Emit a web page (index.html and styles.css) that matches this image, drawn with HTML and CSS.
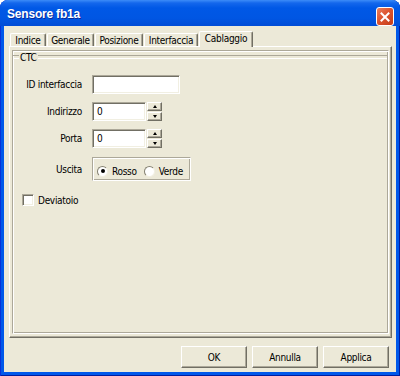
FILE: index.html
```html
<!DOCTYPE html>
<html lang="it">
<head>
    <meta charset="UTF-8">
    <title>Sensore fb1a</title>
    <link rel="stylesheet" href="styles.css">
</head>
<body>
    <div class="window">
        <div class="titlebar">
            <span class="title">Sensore fb1a</span>
            <button class="close" aria-label="Chiudi">
                <svg width="10" height="10" viewBox="0 0 10 10">
                    <path d="M1.5 1.5 L8.5 8.5 M8.5 1.5 L1.5 8.5" stroke="#fff" stroke-width="2" stroke-linecap="square"/>
                </svg>
            </button>
        </div>

        <div class="dialog">
            <div class="tabs">
                <div class="tab">Indice</div>
                <div class="tab">Generale</div>
                <div class="tab">Posizione</div>
                <div class="tab">Interfaccia</div>
                <div class="tab active">Cablaggio</div>
            </div>

            <div class="page">
                <div class="frame">
                    <div class="legend"><span>CTC</span></div>

                    <div class="form">
                        <div class="row">
                            <label class="lbl">ID interfaccia</label>
                            <div class="field wide"></div>
                        </div>
                        <div class="row">
                            <label class="lbl">Indirizzo</label>
                            <div class="field short">0</div>
                            <div class="spin">
                                <span class="spin-btn"><i class="arrow up"></i></span>
                                <span class="spin-btn"><i class="arrow down"></i></span>
                            </div>
                        </div>
                        <div class="row">
                            <label class="lbl">Porta</label>
                            <div class="field short">0</div>
                            <div class="spin">
                                <span class="spin-btn"><i class="arrow up"></i></span>
                                <span class="spin-btn"><i class="arrow down"></i></span>
                            </div>
                        </div>
                        <div class="row row-group">
                            <label class="lbl">Uscita</label>
                            <div class="radio-group">
                                <span class="radio checked"></span><span class="radio-text">Rosso</span>
                                <span class="radio"></span><span class="radio-text">Verde</span>
                            </div>
                        </div>
                    </div>

                    <div class="check-row">
                        <span class="checkbox"></span>
                        <span>Deviatoio</span>
                    </div>
                </div>
            </div>

            <div class="buttons">
                <button class="btn">OK</button>
                <button class="btn">Annulla</button>
                <button class="btn">Applica</button>
            </div>
        </div>
    </div>
</body>
</html>
```

FILE: styles.css
```css
/* Base */
* {
    margin: 0;
    padding: 0;
    box-sizing: border-box;
}

html, body {
    background: #fff;
}

body {
    font-family: "DejaVu Sans Condensed", "Liberation Sans", sans-serif;
    font-size: 10px;
    letter-spacing: -0.3px;
    color: #000;
}

/* Window frame */
.window {
    width: 400px;
    height: 376px;
    display: flex;
    flex-direction: column;
    padding: 0 4px 4px;
    background: #0058EA;
    border-radius: 8px 8px 0 0;
    overflow: hidden;
    box-shadow: inset 1px 0 #0831D9, inset -1px 0 #001EA0, inset 0 -1px #001EA0;
}

.titlebar {
    height: 26px;
    margin: 0 -4px;
    padding: 2px 6px 0 7px;
    display: flex;
    align-items: center;
    justify-content: space-between;
    background: linear-gradient(#3C8CF8 0, #1467EC 3px, #0058E6 8px, #0056E3 18px, #004CD6 26px);
}

.title {
    color: #fff;
    font-family: "Liberation Sans", sans-serif;
    font-weight: bold;
    font-size: 12px;
    letter-spacing: -0.2px;
    text-shadow: 1px 1px #0A2A9A;
}

.close {
    width: 18px;
    height: 19px;
    align-self: flex-start;
    margin-top: 5px;
    display: flex;
    align-items: center;
    justify-content: center;
    border: 1px solid #fff;
    border-radius: 3px;
    background: linear-gradient(135deg, #E9805F 0%, #DD5530 45%, #C43C17 100%);
}

/* Dialog body */
.dialog {
    flex: 1;
    background: #ECE9D8;
    padding: 5px 4px 0 5px;
}

/* Tabs */
.tabs {
    display: flex;
    align-items: flex-end;
    gap: 1px;
    padding-left: 1px;
    height: 15px;
}

.tab {
    height: 13px;
    padding-top: 1px;
    line-height: 11px;
    text-align: center;
    background: #ECE9D8;
    border-top: 1px solid #fff;
    border-left: 1px solid #fff;
    border-right: 1px solid #716F64;
    box-shadow: inset -1px 0 #ACA899;
    border-radius: 2px 2px 0 0;
    white-space: nowrap;
}

.tab:nth-child(1) { width: 36px; }
.tab:nth-child(2) { width: 47px; }
.tab:nth-child(3) { width: 48px; }
.tab:nth-child(4) { width: 54px; }
.tab:nth-child(5) { width: 54px; }

.tab.active {
    height: 16px;
    margin: 0 0 -1px 0;
    position: relative;
    z-index: 1;
}

/* Tab page */
.page {
    height: 292px;
    padding: 3px 2px 2px 2px;
    border-top: 1px solid #fff;
    border-left: 1px solid #fff;
    border-right: 1px solid #716F64;
    border-bottom: 1px solid #716F64;
    box-shadow: inset -1px -1px #ACA899;
}

.frame {
    height: 284px;
    border: 1px solid;
    border-color: #ACA899 #fff #fff #ACA899;
    box-shadow: inset 1px 1px #fff, inset -1px -1px #ACA899;
}

.legend {
    height: 12px;
    display: flex;
    align-items: center;
}

.legend::before,
.legend::after {
    content: "";
    height: 2px;
    border-top: 1px solid #ACA899;
    border-bottom: 1px solid #fff;
}

.legend::before {
    width: 6px;
}

.legend::after {
    flex: 1;
    margin-right: 1px;
}

.legend span {
    padding: 0 1px;
}

/* Form */
.form {
    margin-top: 12px;
    display: flex;
    flex-direction: column;
    gap: 8px;
}

.row {
    display: flex;
    align-items: center;
    height: 19px;
}

.row-group {
    height: 24px;
    margin-top: 1px;
}

.lbl {
    width: 69px;
    margin-right: 10px;
    text-align: right;
}

.field {
    height: 19px;
    padding: 3px 0 0 4px;
    background: #fff;
    border: 1px solid;
    border-color: #ACA899 #fff #fff #ACA899;
    box-shadow: inset 1px 1px #716F64, inset -1px -1px #F1EFE2;
}

.field.wide {
    width: 88px;
}

.field.short {
    width: 54px;
}

.spin {
    margin-left: 1px;
    display: flex;
    flex-direction: column;
    gap: 1px;
}

.spin-btn {
    width: 15px;
    height: 9px;
    display: flex;
    align-items: center;
    justify-content: center;
    background: #ECE9D8;
    border-top: 1px solid #fff;
    border-left: 1px solid #fff;
    border-right: 1px solid #716F64;
    border-bottom: 1px solid #716F64;
    box-shadow: inset -1px -1px #ACA899;
}

.arrow {
    width: 0;
    height: 0;
    border-left: 2.5px solid transparent;
    border-right: 2.5px solid transparent;
}

.arrow.up {
    border-bottom: 3px solid #000;
}

.arrow.down {
    border-top: 3px solid #000;
}

/* Radio group */
.radio-group {
    width: 99px;
    height: 24px;
    padding: 4px 0 0 4px;
    display: flex;
    align-items: center;
    border: 1px solid;
    border-color: #ACA899 #fff #fff #ACA899;
    box-shadow: inset 1px 1px #fff, inset -1px -1px #ACA899;
}

.radio {
    width: 11px;
    height: 11px;
    border-radius: 50%;
    background: #fff;
    border: 1px solid;
    border-color: #848071 #F1EFE2 #F1EFE2 #848071;
    display: flex;
    align-items: center;
    justify-content: center;
}

.radio.checked::after {
    content: "";
    width: 4px;
    height: 4px;
    border-radius: 50%;
    background: #000;
}

.radio-text {
    margin: 0 7px 0 4px;
}

/* Checkbox */
.check-row {
    margin: 13px 0 0 9px;
    display: flex;
    align-items: center;
    gap: 4px;
}

.checkbox {
    width: 12px;
    height: 12px;
    background: #fff;
    border: 1px solid;
    border-color: #ACA899 #fff #fff #ACA899;
    box-shadow: inset 1px 1px #716F64, inset -1px -1px #F1EFE2;
}

/* Bottom buttons */
.buttons {
    margin-top: 8px;
    padding-right: 3px;
    display: flex;
    justify-content: flex-end;
    gap: 5px;
}

.btn {
    width: 66px;
    height: 22px;
    font-family: inherit;
    font-size: 10px;
    letter-spacing: -0.3px;
    color: #000;
    background: #ECE9D8;
    border-top: 1px solid #fff;
    border-left: 1px solid #fff;
    border-right: 1px solid #716F64;
    border-bottom: 1px solid #716F64;
    box-shadow: inset -1px -1px #ACA899;
}
```
